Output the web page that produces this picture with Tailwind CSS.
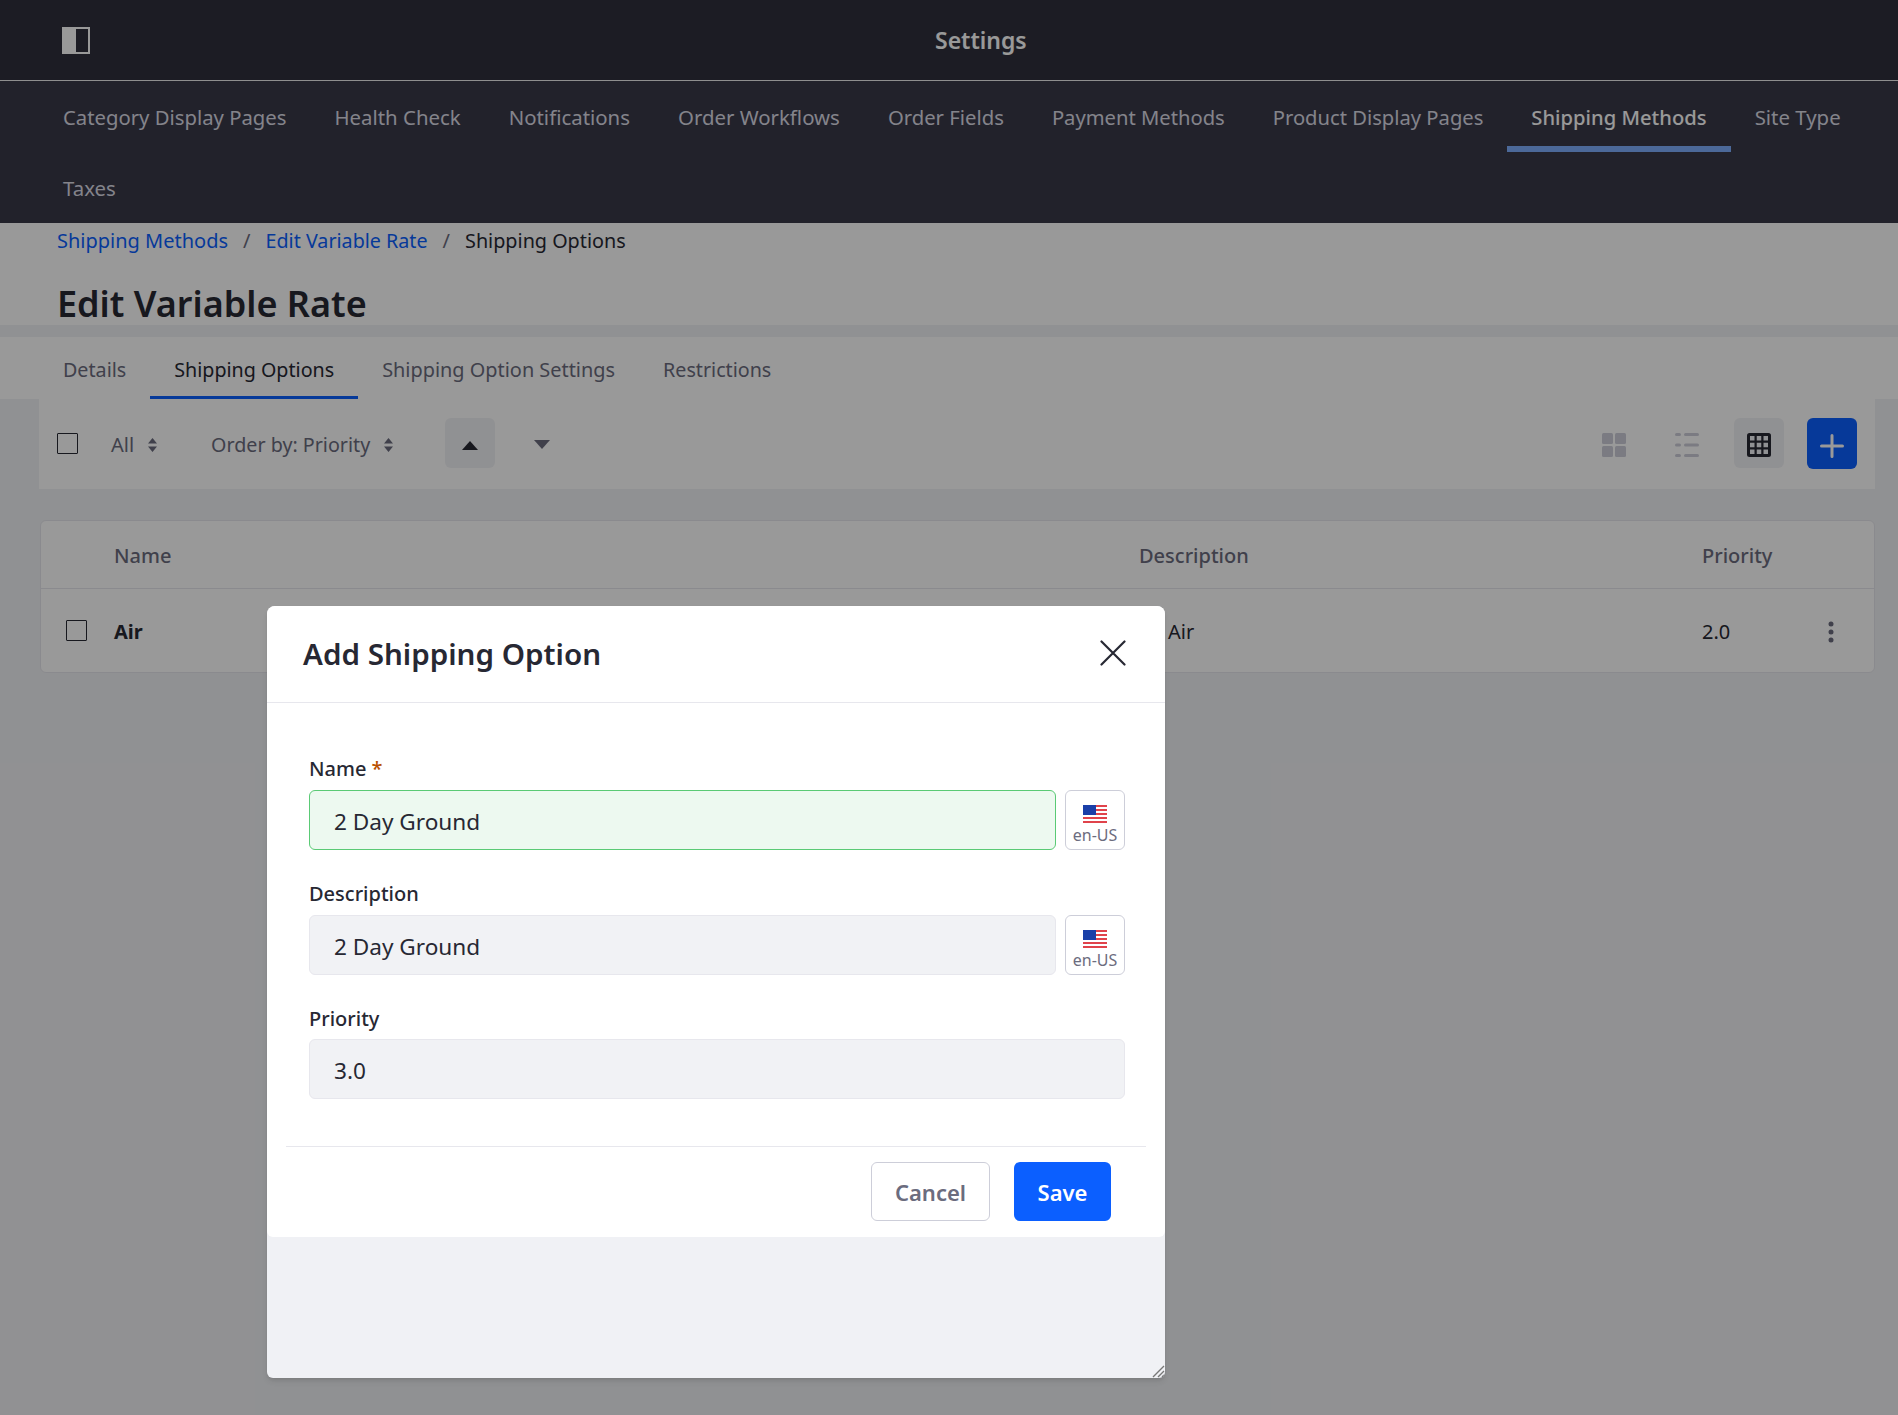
<!DOCTYPE html>
<html lang="en">
<head>
  <meta charset="UTF-8">
  <meta name="viewport" content="width=device-width, initial-scale=1.0">
  <title>Settings - Shipping Methods</title>
  <script src="https://cdn.jsdelivr.net/npm/@tailwindcss/browser@4"></script>
</head>
<body class="bg-[#f1f2f5] text-[#272833] font-['Noto_Sans',sans-serif] text-[20px] h-[1415px] overflow-hidden relative">

  <!-- Top bar -->
  <header class="h-[81px] bg-[#30303c] border-b border-[#eeeeee] flex items-center pl-[62px] relative">
    <svg width="28" height="27" viewBox="0 0 28 27"><rect x="1" y="1" width="26" height="25" fill="none" stroke="#fff" stroke-width="2"/><rect x="0" y="0" width="14" height="27" fill="#fff"/></svg>
    <span class="absolute left-[935px] top-[24px] text-[23px] font-semibold text-white leading-[32px]">Settings</span>
  </header>

  <!-- Settings nav -->
  <nav class="bg-[#3a3a49] h-[142px] pl-[39px] flex flex-wrap content-start text-[#dcdce6] text-[20.4px]">
    <a class="h-[71px] px-6 pt-[8px] border-b-[6px] border-transparent flex items-center text-[20.3px]">Category Display Pages</a>
    <a class="h-[71px] px-6 pt-[8px] border-b-[6px] border-transparent flex items-center">Health Check</a>
    <a class="h-[71px] px-6 pt-[8px] border-b-[6px] border-transparent flex items-center">Notifications</a>
    <a class="h-[71px] px-6 pt-[8px] border-b-[6px] border-transparent flex items-center">Order Workflows</a>
    <a class="h-[71px] px-6 pt-[8px] border-b-[6px] border-transparent flex items-center text-[20.3px]">Order Fields</a>
    <a class="h-[71px] px-6 pt-[8px] border-b-[6px] border-transparent flex items-center text-[20.2px]">Payment Methods</a>
    <a class="h-[71px] px-6 pt-[8px] border-b-[6px] border-transparent flex items-center text-[20.2px]">Product Display Pages</a>
    <a class="h-[71px] px-6 pt-[8px] border-b-[6px] border-[#7fb0ff] flex items-center text-white font-medium text-[20.2px]">Shipping Methods</a>
    <a class="h-[71px] px-6 pt-[8px] border-b-[6px] border-transparent flex items-center">Site Type</a>
    <a class="h-[71px] px-6 pt-[8px] border-b-[6px] border-transparent flex items-center">Taxes</a>
  </nav>

  <!-- Breadcrumb and title -->
  <section class="bg-white h-[102px] px-[57px]">
    <div class="flex items-center h-[36px] gap-[15px]">
      <a class="text-[#0b5fff]">Shipping Methods</a>
      <span class="text-[#6b6c7e]">/</span>
      <a class="text-[#0b5fff] text-[19.7px]">Edit Variable Rate</a>
      <span class="text-[#6b6c7e]">/</span>
      <span class="text-[19.8px]">Shipping Options</span>
    </div>
    <h1 class="text-[36px] font-semibold leading-[48px] mt-[21px]">Edit Variable Rate</h1>
  </section>

  <!-- Tabs -->
  <div class="bg-white h-[62px] mt-[12px] pl-[39px] flex text-[#6b6c7e] text-[19.7px]">
    <a class="px-6 pt-[7px] flex items-center border-b-[3px] border-transparent">Details</a>
    <a class="px-6 pt-[7px] flex items-center border-b-[3px] border-[#0b5fff] text-[#272833]">Shipping Options</a>
    <a class="px-6 pt-[7px] flex items-center border-b-[3px] border-transparent text-[19.9px]">Shipping Option Settings</a>
    <a class="px-6 pt-[7px] flex items-center border-b-[3px] border-transparent">Restrictions</a>
  </div>

  <!-- Management toolbar -->
  <div class="bg-white h-[90px] mx-[39px] w-[1836px] flex items-center pb-[2px] text-[#6b6c7e]">
    <span class="ml-[18px] w-[21px] h-[21px] border-[1.5px] border-[#272833] rounded-[1px]"></span>
    <span class="ml-[33px] pt-[4px]">All</span>
    <svg class="ml-[14px] mt-[4px]" width="9" height="14" viewBox="0 0 9 14" fill="#6b6c7e"><path d="M4.5 0 9 5.5H0zM4.5 14 0 8.5h9z"/></svg>
    <span class="ml-[54px] pt-[4px] text-[19.7px]">Order by: Priority</span>
    <svg class="ml-[14px] mt-[4px]" width="9" height="14" viewBox="0 0 9 14" fill="#6b6c7e"><path d="M4.5 0 9 5.5H0zM4.5 14 0 8.5h9z"/></svg>
    <span class="ml-[52px] w-[50px] h-[50px] pt-[4px] rounded-md bg-[#f1f2f5] flex items-center justify-center">
      <svg width="16" height="9" viewBox="0 0 16 9" fill="#272833"><path d="M8 0 16 9H0z"/></svg>
    </span>
    <span class="ml-[22px] w-[50px] h-[50px] pt-[3px] flex items-center justify-center">
      <svg width="16" height="9" viewBox="0 0 16 9" fill="#6b6c7e"><path d="M8 9 0 0h16z"/></svg>
    </span>
    <span class="ml-auto w-[50px] h-[50px] pt-[4px] flex items-center justify-center">
      <svg width="24" height="24" viewBox="0 0 24 24" fill="#cdced9"><rect width="11" height="11" rx="1.5"/><rect x="13" width="11" height="11" rx="1.5"/><rect y="13" width="11" height="11" rx="1.5"/><rect x="13" y="13" width="11" height="11" rx="1.5"/></svg>
    </span>
    <span class="ml-[23px] w-[50px] h-[50px] pt-[4px] flex items-center justify-center">
      <svg width="24" height="24" viewBox="0 0 24 24" fill="#cdced9"><rect y="0" width="6" height="3" rx="1.5"/><rect x="9" y="0" width="15" height="3" rx="1.5"/><rect y="10.5" width="6" height="3" rx="1.5"/><rect x="9" y="10.5" width="15" height="3" rx="1.5"/><rect y="21" width="6" height="3" rx="1.5"/><rect x="9" y="21" width="15" height="3" rx="1.5"/></svg>
    </span>
    <span class="ml-[22px] w-[50px] h-[50px] pt-[4px] rounded-md bg-[#f1f2f5] flex items-center justify-center">
      <svg width="24" height="24" viewBox="0 0 24 24"><rect width="24" height="24" rx="2.5" fill="#272833"/><g fill="#f1f2f5"><rect x="3" y="3" width="4.5" height="4.5"/><rect x="9.75" y="3" width="4.5" height="4.5"/><rect x="16.5" y="3" width="4.5" height="4.5"/><rect x="3" y="9.75" width="4.5" height="4.5"/><rect x="9.75" y="9.75" width="4.5" height="4.5"/><rect x="16.5" y="9.75" width="4.5" height="4.5"/><rect x="3" y="16.5" width="4.5" height="4.5"/><rect x="9.75" y="16.5" width="4.5" height="4.5"/><rect x="16.5" y="16.5" width="4.5" height="4.5"/></g></svg>
    </span>
    <span class="ml-[23px] mr-[18px] w-[50px] h-[51px] pt-[5px] rounded-md bg-[#0b5fff] flex items-center justify-center">
      <svg width="24" height="24" viewBox="0 0 24 24" stroke="#fff" stroke-width="3" stroke-linecap="round"><path d="M12 1.5v21M1.5 12h21"/></svg>
    </span>
  </div>

  <!-- Table -->
  <div class="bg-white border border-[#e7e7ed] rounded-md mt-[31px] ml-[40px] w-[1835px] h-[153px] relative">
    <div class="h-[68px] pt-[2px] border-b border-[#e7e7ed] flex items-center text-[#6b6c7e] font-medium">
      <span class="ml-[73px] w-[1025px]">Name</span>
      <span class="w-[563px]">Description</span>
      <span>Priority</span>
    </div>
    <div class="h-[84px] pt-[2px] flex items-center">
      <span class="ml-[25px] mb-[4px] w-[21px] h-[21px] border-[1.5px] border-[#272833] rounded-[1px]"></span>
      <span class="ml-[27px] w-[1054px] font-bold">Air</span>
      <span class="w-[534px]">Air</span>
      <span class="w-[126px]">2.0</span>
      <svg width="6" height="22" viewBox="0 0 6 22" fill="#6b6c7e"><circle cx="3" cy="3" r="2.5"/><circle cx="3" cy="11" r="2.5"/><circle cx="3" cy="19" r="2.5"/></svg>
    </div>
  </div>

  <!-- Backdrop -->
  <div class="absolute inset-0 bg-black/40"></div>

  <!-- Modal -->
  <div class="absolute left-[267px] top-[606px] w-[898px] h-[772px] bg-[#f0f1f5] rounded-t-lg rounded-b-md overflow-hidden flex flex-col shadow-md">
    <div class="h-[97px] bg-white border-b border-[#e7e7ed] flex items-center justify-between pl-[36px] pr-[39px] shrink-0">
      <h2 class="text-[29.6px] font-semibold text-[#272833]">Add Shipping Option</h2>
      <svg class="-mt-[2px]" width="26" height="26" viewBox="0 0 26 26" stroke="#272833" stroke-width="2.2" stroke-linecap="round"><path d="M1.5 1.5l23 23M24.5 1.5l-23 23"/></svg>
    </div>
    <div class="bg-white h-[534px] rounded-b-md shrink-0 pt-[51px] pl-[42px] pr-[40px] flex flex-col">
      <label class="font-medium leading-[30px]">Name <span class="text-[#b95000]">*</span></label>
      <div class="flex gap-[9px] mt-[6px]">
        <div class="flex-1 h-[60px] rounded-md bg-[#edf9f0] border border-[#5aca75] px-6 pt-[3px] flex items-center text-[22.6px]">2 Day Ground</div>
        <div class="w-[60px] h-[60px] rounded-md border border-[#cdced9] flex flex-col items-center pt-[14px] text-[#6b6c7e] text-[16px] leading-[24px]">
          <svg class="shrink-0" width="24" height="18" viewBox="0 0 24 18"><rect width="24" height="18" fill="#fff"/><g fill="#e0434b"><rect width="24" height="2"/><rect y="4" width="24" height="2"/><rect y="8" width="24" height="2"/><rect y="12" width="24" height="2"/><rect y="16" width="24" height="2"/></g><rect width="13" height="10" fill="#1a3fa8"/></svg>
          en-US
        </div>
      </div>
      <label class="font-medium leading-[30px] mt-[29px]">Description</label>
      <div class="flex gap-[9px] mt-[6px]">
        <div class="flex-1 h-[60px] rounded-md bg-[#f1f2f5] border border-[#e7e7ed] px-6 pt-[3px] flex items-center text-[22.6px]">2 Day Ground</div>
        <div class="w-[60px] h-[60px] rounded-md border border-[#cdced9] flex flex-col items-center pt-[14px] text-[#6b6c7e] text-[16px] leading-[24px]">
          <svg class="shrink-0" width="24" height="18" viewBox="0 0 24 18"><rect width="24" height="18" fill="#fff"/><g fill="#e0434b"><rect width="24" height="2"/><rect y="4" width="24" height="2"/><rect y="8" width="24" height="2"/><rect y="12" width="24" height="2"/><rect y="16" width="24" height="2"/></g><rect width="13" height="10" fill="#1a3fa8"/></svg>
          en-US
        </div>
      </div>
      <label class="font-medium leading-[30px] mt-[29px]">Priority</label>
      <div class="h-[60px] mt-[5px] rounded-md bg-[#f1f2f5] border border-[#e7e7ed] px-6 pt-[3px] flex items-center text-[22.6px]">3.0</div>
      <div class="border-t border-[#e7e7ed] mt-[47px] -ml-[23px] -mr-[21px] flex justify-end gap-[24px] pt-[15px] pr-[35px]">
        <button class="w-[119px] h-[59px] pt-[2px] rounded-md border border-[#cdced9] text-[#6b6c7e] text-[22px] font-semibold">Cancel</button>
        <button class="w-[97px] h-[59px] pt-[2px] rounded-md bg-[#0b5fff] text-white text-[22px] font-semibold">Save</button>
      </div>
    </div>
    <svg class="absolute right-0 bottom-0" width="14" height="14" viewBox="0 0 14 14" stroke="#777" stroke-width="1.4"><path d="M13 2 2 13M13 7 7 13M13 11 11 13"/></svg>
  </div>

</body>
</html>
